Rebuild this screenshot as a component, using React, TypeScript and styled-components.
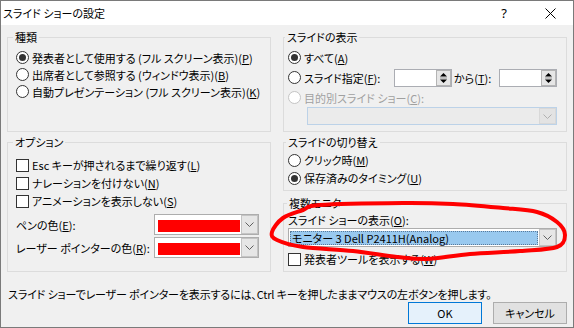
import { ReactNode } from "react";
import { styled, createGlobalStyle } from "styled-components";

const GlobalStyle = createGlobalStyle`
	html, body {
		margin: 0;
		padding: 0;
		background: #fff;
	}
	body {
		font-family: "Noto Sans CJK JP", "Noto Sans", sans-serif;
		font-size: 11px;
		line-height: 16px;
		color: #000;
		font-feature-settings: "palt";
	}
`;

const Window = styled.div`
	position: relative;
	width: 574px;
	height: 328px;
	box-sizing: border-box;
	border: 1px solid #7a7a7a;
	background: #f0f0f0;
	display: flex;
	flex-direction: column;
	overflow: hidden;
`;

const TitleBar = styled.div`
	flex: none;
	height: 24px;
	background: #fff;
	display: flex;
	align-items: center;
	padding-left: 2px;
`;

const Title = styled.span`
	flex: 1;
`;

const TitleButton = styled.div`
	width: 46px;
	height: 24px;
	display: flex;
	align-items: center;
	justify-content: center;
	font-family: "Noto Sans", sans-serif;
	font-size: 13px;
`;

const Body = styled.div`
	flex: 1;
	display: flex;
	flex-direction: column;
	padding: 4px 6px 0;
`;

const Columns = styled.div`
	display: grid;
	grid-template-columns: 264px 284px;
	column-gap: 12px;
`;

const Column = styled.div`
	display: flex;
	flex-direction: column;
`;

const Group = styled.div<{ $mt: number; $h: number }>`
	margin-top: ${(p) => p.$mt}px;
	height: ${(p) => p.$h}px;
	box-sizing: border-box;
	border: 1px solid #dcdcdc;
	display: flex;
	flex-direction: column;
`;

const Legend = styled.span<{ $x: number }>`
	align-self: flex-start;
	height: 16px;
	margin: -9px 0 0 ${(p) => p.$x}px;
	padding: 0 2px;
	background: #f0f0f0;
`;

const Stack = styled.div<{ $pl: number; $pt: number }>`
	display: flex;
	flex-direction: column;
	padding: ${(p) => p.$pt}px 0 0 ${(p) => p.$pl}px;
`;

const Row = styled.div<{ $h?: number; $mt?: number; $w?: number; $off?: boolean }>`
	display: flex;
	align-items: center;
	gap: 3px;
	white-space: nowrap;
	height: ${(p) => p.$h ?? 17}px;
	margin-top: ${(p) => p.$mt ?? 0}px;
	color: ${(p) => (p.$off ? "#a0a0a0" : "#000")};
	${(p) => (p.$w ? `flex: 0 0 ${p.$w}px;` : "")}
`;

const RadioMark = styled.span<{ $on?: boolean; $off?: boolean }>`
	flex: none;
	width: 13px;
	height: 13px;
	box-sizing: border-box;
	border-radius: 50%;
	border: 1px solid ${(p) => (p.$off ? "#c4c4c4" : "#333")};
	background: #fff;
	display: flex;
	align-items: center;
	justify-content: center;
	&::after {
		content: "";
		width: 7px;
		height: 7px;
		border-radius: 50%;
		background: #333;
		display: ${(p) => (p.$on ? "block" : "none")};
	}
`;

const CheckMark = styled.span`
	flex: none;
	width: 13px;
	height: 13px;
	box-sizing: border-box;
	border: 1px solid #333;
	background: #fff;
`;

const U = styled.span`
	text-decoration: underline;
	text-underline-offset: 1px;
`;

const SpinLine = styled.div`
	display: flex;
	align-items: center;
	height: 19px;
	margin-top: 2px;
`;

const SpinBox = styled.div`
	flex: none;
	width: 58px;
	height: 18px;
	box-sizing: border-box;
	border: 1px solid #abadb3;
	background: #fff;
	display: flex;
	justify-content: flex-end;
`;

const SpinButtons = styled.div`
	width: 15px;
	box-sizing: border-box;
	border: 1px solid #b4b4b4;
	background: #e6e6e6;
	display: flex;
	align-items: center;
	justify-content: center;
`;

const SpinLabel = styled.span`
	flex: 0 0 45px;
	padding-left: 2px;
	white-space: nowrap;
`;

const Combo = styled.div<{ $w: number; $h: number; $ml?: number; $mt?: number; $off?: boolean }>`
	width: ${(p) => p.$w}px;
	height: ${(p) => p.$h}px;
	margin: ${(p) => p.$mt ?? 0}px 0 0 ${(p) => p.$ml ?? 0}px;
	box-sizing: border-box;
	border: 1px solid ${(p) => (p.$off ? "#bcd2e8" : "#adadad")};
	background: ${(p) => (p.$off ? "#ebebeb" : "#fff")};
	display: flex;
`;

const ComboField = styled.div<{ $sel?: boolean }>`
	flex: 1;
	margin: 2px 1px 1px 1px;
	padding-left: 2px;
	display: flex;
	align-items: center;
	white-space: nowrap;
	background: ${(p) => (p.$sel ? "#99c9ef" : "transparent")};
	outline: ${(p) => (p.$sel ? "1px dotted #5a7a9a" : "none")};
	outline-offset: -1px;
`;

const Swatch = styled.div`
	flex: 1;
	margin: 5px 1px 2px 3px;
	background: #ff0000;
`;

const DropButton = styled.div<{ $off?: boolean }>`
	flex: 0 0 17px;
	box-sizing: border-box;
	border: 1px solid ${(p) => (p.$off ? "#d8d8d8" : "#c4c4c4")};
	background: ${(p) => (p.$off ? "#e3e3e3" : "#e6e6e6")};
	display: flex;
	align-items: center;
	justify-content: center;
`;

const ColorRow = styled.div<{ $mt: number }>`
	display: grid;
	grid-template-columns: 138px 105px;
	align-items: center;
	margin-top: ${(p) => p.$mt}px;
	white-space: nowrap;
`;

const Hint = styled.div`
	margin-top: 14px;
	height: 16px;
	padding-left: 1px;
	white-space: nowrap;
	letter-spacing: -0.15px;
`;

const Buttons = styled.div`
	display: flex;
	justify-content: flex-end;
	gap: 11px;
`;

const Button = styled.div<{ $primary?: boolean }>`
	width: 74px;
	height: 22px;
	box-sizing: border-box;
	border: 1px solid ${(p) => (p.$primary ? "#0078d7" : "#adadad")};
	background: ${(p) => (p.$primary ? "#e5f1fb" : "#e1e1e1")};
	display: flex;
	align-items: center;
	justify-content: center;
`;

const Scribble = styled.svg`
	position: absolute;
	left: -1px;
	top: -1px;
	pointer-events: none;
`;

const Chevron = ({ color = "#606060" }: { color?: string }) => (
	<svg width="9" height="5" viewBox="0 0 9 5">
		<polyline points="0.5,0.5 4.5,4.5 8.5,0.5" fill="none" stroke={color} strokeWidth="1" />
	</svg>
);

const SpinArrows = () => (
	<svg width="7" height="12" viewBox="0 0 7 12">
		<polygon points="3.5,1 7,4.5 0,4.5" fill="#000" />
		<line x1="0" y1="6" x2="7" y2="6" stroke="#9a9a9a" strokeWidth="1" />
		<polygon points="0,7.5 7,7.5 3.5,11" fill="#000" />
	</svg>
);

const Spin = () => (
	<SpinBox>
		<SpinButtons>
			<SpinArrows />
		</SpinButtons>
	</SpinBox>
);

type OptionProps = { on?: boolean; off?: boolean; h?: number; mt?: number; w?: number; children: ReactNode };

const RadioOption = ({ on, off, h, mt, w, children }: OptionProps) => (
	<Row $h={h} $mt={mt} $w={w} $off={off}>
		<RadioMark $on={on} $off={off} />
		<span>{children}</span>
	</Row>
);

const CheckOption = ({ h, mt, children }: OptionProps) => (
	<Row $h={h ?? 18} $mt={mt}>
		<CheckMark />
		<span>{children}</span>
	</Row>
);

const ColorCombo = () => (
	<Combo $w={105} $h={21}>
		<Swatch />
		<DropButton>
			<Chevron />
		</DropButton>
	</Combo>
);

// freehand red loop drawn around the monitor selector
const loop = [
	[272, 232], [283, 218], [303, 210], [320, 205], [403, 203], [453, 204],
	[503, 208], [537, 212], [557, 222], [565, 235], [557, 247], [520, 251],
	[470, 254], [427, 259], [397, 257], [353, 251], [303, 247], [277, 240],
];

const smoothLoop = (pts: number[][]) => {
	const n = pts.length;
	let d = `M${pts[0][0]},${pts[0][1]}`;
	for (let i = 0; i < n; i++) {
		const p0 = pts[(i - 1 + n) % n];
		const p1 = pts[i];
		const p2 = pts[(i + 1) % n];
		const p3 = pts[(i + 2) % n];
		const c1x = p1[0] + (p2[0] - p0[0]) / 6;
		const c1y = p1[1] + (p2[1] - p0[1]) / 6;
		const c2x = p2[0] - (p3[0] - p1[0]) / 6;
		const c2y = p2[1] - (p3[1] - p1[1]) / 6;
		d += ` C${c1x.toFixed(1)},${c1y.toFixed(1)} ${c2x.toFixed(1)},${c2y.toFixed(1)} ${p2[0]},${p2[1]}`;
	}
	return d;
};

export default function App() {
	return (
		<>
			<GlobalStyle />
			<Window>
				<TitleBar>
					<Title>スライド ショーの設定</Title>
					<TitleButton>?</TitleButton>
					<TitleButton>
						<svg width="11" height="11" viewBox="0 0 11 11">
							<path d="M0.5,0.5 L10.5,10.5 M10.5,0.5 L0.5,10.5" stroke="#000" strokeWidth="1" />
						</svg>
					</TitleButton>
				</TitleBar>
				<Body>
					<Columns>
						<Column>
							<Group $mt={8} $h={95}>
								<Legend $x={5}>種類</Legend>
								<Stack $pl={8} $pt={4}>
									<RadioOption on>
										発表者として使用する (フル スクリーン表示)(<U>P</U>)
									</RadioOption>
									<RadioOption>
										出席者として参照する (ウィンドウ表示)(<U>B</U>)
									</RadioOption>
									<RadioOption>
										自動プレゼンテーション (フル スクリーン表示)(<U>K</U>)
									</RadioOption>
								</Stack>
							</Group>
							<Group $mt={10} $h={130}>
								<Legend $x={5}>オプション</Legend>
								<Stack $pl={8} $pt={6}>
									<CheckOption>
										Esc キーが押されるまで繰り返す(<U>L</U>)
									</CheckOption>
									<CheckOption>
										ナレーションを付けない(<U>N</U>)
									</CheckOption>
									<CheckOption>
										アニメーションを表示しない(<U>S</U>)
									</CheckOption>
									<ColorRow $mt={4}>
										<span>
											ペンの色(<U>E</U>):
										</span>
										<ColorCombo />
									</ColorRow>
									<ColorRow $mt={2}>
										<span>
											レーザー ポインターの色(<U>R</U>):
										</span>
										<ColorCombo />
									</ColorRow>
								</Stack>
							</Group>
						</Column>
						<Column>
							<Group $mt={8} $h={95}>
								<Legend $x={1}>スライドの表示</Legend>
								<Stack $pl={4} $pt={4}>
									<RadioOption on>
										すべて(<U>A</U>)
									</RadioOption>
									<SpinLine>
										<RadioOption w={106}>
											スライド指定(<U>F</U>):
										</RadioOption>
										<Spin />
										<SpinLabel>
											から(<U>T</U>):
										</SpinLabel>
										<Spin />
									</SpinLine>
									<RadioOption off mt={2}>
										目的別スライド ショー(<U>C</U>):
									</RadioOption>
									<Combo $off $w={250} $h={18} $ml={19} $mt={1}>
										<ComboField />
										<DropButton $off>
											<Chevron color="#b0b0b0" />
										</DropButton>
									</Combo>
								</Stack>
							</Group>
							<Group $mt={10} $h={49}>
								<Legend $x={2}>スライドの切り替え</Legend>
								<Stack $pl={4} $pt={1}>
									<RadioOption h={18}>
										クリック時(<U>M</U>)
									</RadioOption>
									<RadioOption on h={18}>
										保存済みのタイミング(<U>U</U>)
									</RadioOption>
								</Stack>
							</Group>
							<Group $mt={12} $h={69}>
								<Legend $x={3}>複数モニター</Legend>
								<Stack $pl={4} $pt={1}>
									<Row $h={16}>
										<span>
											スライド ショーの表示(<U>O</U>):
										</span>
									</Row>
									<Combo $w={269} $h={19}>
										<ComboField $sel>モニター 3 Dell P2411H(Analog)</ComboField>
										<DropButton>
											<Chevron />
										</DropButton>
									</Combo>
									<CheckOption mt={3}>
										発表者ツールを表示する(<U>W</U>)
									</CheckOption>
								</Stack>
							</Group>
						</Column>
					</Columns>
					<Hint>
						スライド ショーでレーザー ポインターを表示するには、Ctrl キーを押したままマウスの左ボタンを押します。
					</Hint>
					<Buttons>
						<Button $primary>OK</Button>
						<Button>キャンセル</Button>
					</Buttons>
				</Body>
				<Scribble width="574" height="328" viewBox="0 0 574 328">
					<path d={smoothLoop(loop)} fill="none" stroke="#ff0000" strokeWidth="4" strokeLinejoin="round" />
				</Scribble>
			</Window>
		</>
	);
}
